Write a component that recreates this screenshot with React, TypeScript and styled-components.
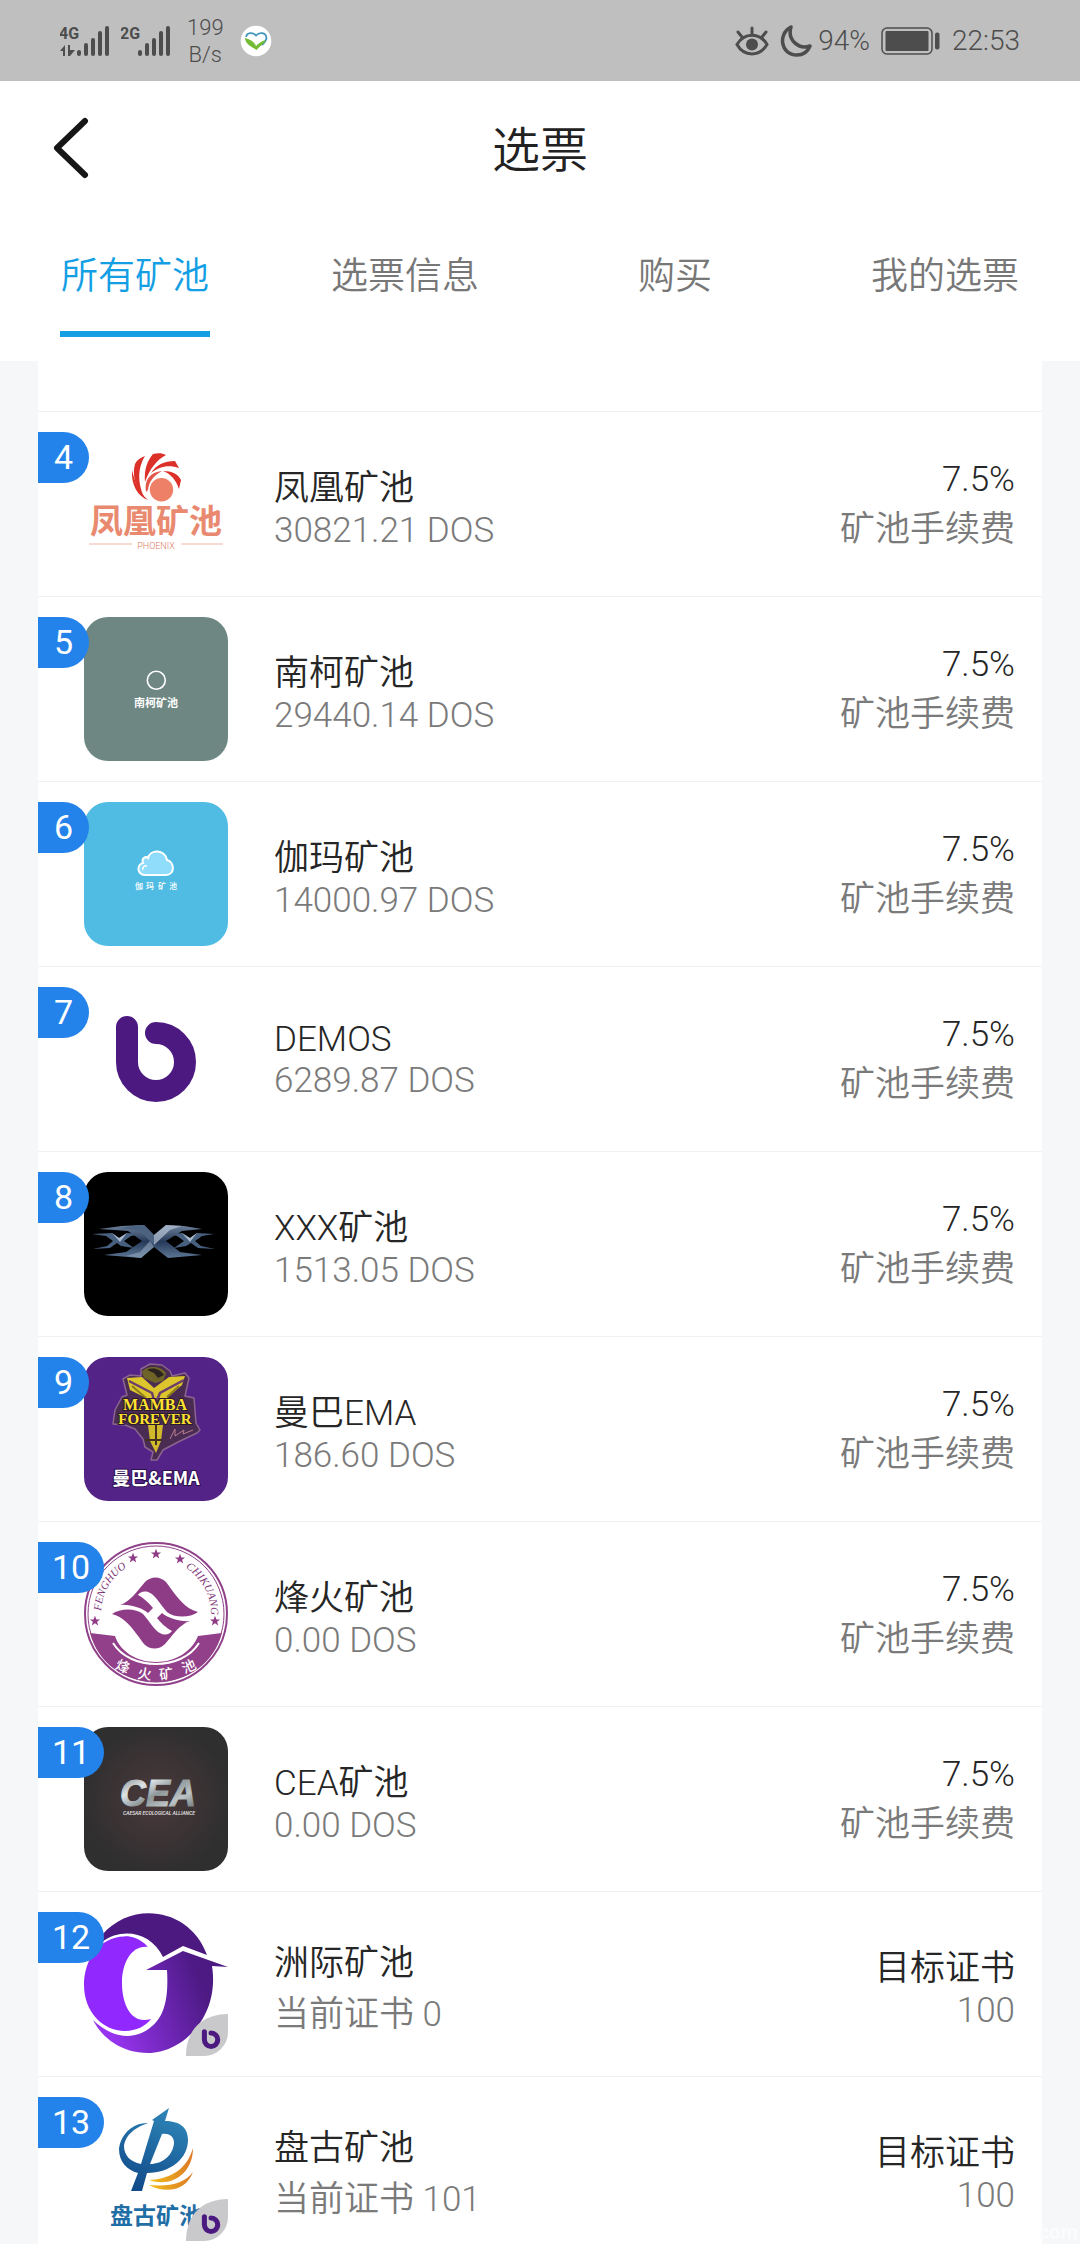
import React from 'react';
import styled, { createGlobalStyle } from 'styled-components';

const fontStack = `Roboto, "Noto Sans CJK SC", sans-serif`;

const GlobalStyle = createGlobalStyle`
  *, *::before, *::after { box-sizing: border-box; }
  body { margin: 0; background: #f6f7f9; font-family: ${fontStack}; }
  ul { margin: 0; padding: 0; list-style: none; }
  h1, p { margin: 0; font-weight: inherit; }
  button { border: 0; padding: 0; background: none; font: inherit; cursor: pointer; }
`;

const Screen = styled.div`
  position: relative;
  display: flex;
  flex-direction: column;
  height: 100vh;
  overflow: hidden;
`;

const StatusBar = styled.div`
  flex: none;
  display: flex;
  justify-content: space-between;
  align-items: center;
  height: 81px;
  padding: 0 60px;
  background: #bfbfbf;
  color: #4d4d4d;
  font-size: 28px;
  font-weight: 350;
`;

const StatusGroup = styled.div<{ $gap: number }>`
  display: flex;
  align-items: center;
  gap: ${(p) => p.$gap}px;
`;

const NetworkSpeed = styled.div`
  padding: 0 5px;
  font-size: 22px;
  line-height: 27px;
  text-align: center;
`;

const TitleBar = styled.header`
  flex: none;
  display: grid;
  grid-template-columns: 96px 1fr 96px;
  align-items: center;
  height: 136px;
  padding: 0 44px;
  background: #fff;
`;

const BackButton = styled.button`
  display: flex;
  padding: 0 8px;
`;

const Title = styled.h1`
  padding-top: 4px;
  text-align: center;
  font-size: 48px;
  font-weight: 350;
  line-height: 72px;
  color: #222;
`;

const Tabs = styled.nav`
  flex: none;
  display: flex;
  justify-content: space-between;
  padding: 33px 60px 24px;
  background: #fff;
`;

const Tab = styled.button<{ $active?: boolean }>`
  width: 150px;
  padding-bottom: 27px;
  border-bottom: 6px solid ${(p) => (p.$active ? '#149fe4' : 'transparent')};
  color: ${(p) => (p.$active ? '#149fe4' : '#777')};
  font-size: 37px;
  font-weight: 350;
  line-height: 54px;
  white-space: nowrap;
`;

const PoolList = styled.ul`
  flex: 1;
  min-height: 0;
  margin: 0 38px;
  background: #fff;
  overflow-y: auto;
  scrollbar-width: none;
`;

const PreviousRowEnd = styled.li`
  height: 50px;
`;

const PoolRow = styled.li`
  position: relative;
  display: flex;
  align-items: center;
  gap: 46px;
  height: 185px;
  padding: 0 27px 0 46px;
  border-top: 1px solid #f0f0f0;
`;

const Rank = styled.span`
  position: absolute;
  left: 0;
  top: 20px;
  min-width: 51px;
  height: 51px;
  padding: 0 14px;
  border-radius: 0 26px 26px 0;
  background: #2383ea;
  color: #fff;
  font-size: 34px;
  line-height: 50px;
  text-align: center;
`;

const LogoFrame = styled.div`
  flex: none;
  display: flex;
  width: 144px;
  height: 144px;
  border-radius: 24px;
  overflow: hidden;
`;

const Details = styled.div<{ $end?: boolean }>`
  flex: ${(p) => (p.$end ? 'none' : '1')};
  padding-top: 1px;
  text-align: ${(p) => (p.$end ? 'right' : 'left')};
  font-size: 35px;
  font-weight: 350;
`;

const Primary = styled.p`
  color: #262626;
`;

const Secondary = styled.p`
  color: #7a7a7a;
`;

const SiteMark = styled.span`
  position: absolute;
  right: 2px;
  bottom: 2px;
  color: #fbfcfd;
  font-size: 20px;
  font-weight: 700;
  line-height: 20px;
`;

const cjk = '"Noto Sans CJK SC", sans-serif';

function SignalIcon({ label, data }: { label: string; data?: boolean }) {
  return (
    <svg width="50" height="32" viewBox="0 0 50 32" fill="#4d4d4d">
      <text x="-1" y="14" fontFamily="Roboto, sans-serif" fontWeight="700" fontSize="16">{label}</text>
      {data && (
        <path d="M0 26 L5 20 V31 H3 V26Z M8 20 H10 V25 H15 L10 31 H8Z" />
      )}
      <rect x="17" y="25" width="4" height="6" rx="2" />
      <rect x="24" y="18" width="4" height="13" rx="2" />
      <rect x="31" y="13" width="4" height="18" rx="2" />
      <rect x="38" y="6" width="4" height="25" rx="2" />
      <rect x="45" y="1" width="4" height="30" rx="2" />
    </svg>
  );
}

function HealthIcon() {
  return (
    <svg width="32" height="32" viewBox="0 0 32 32">
      <circle cx="16" cy="16" r="15.3" fill="#fff" />
      <path d="M6 12 C7 7 13 7 16 10.500 C19 7 26 7 26.500 13 C26 16 24 18 22 20" fill="none" stroke="#4596bd" strokeWidth="1.800" />
      <path d="M5 13 C9 14 14 16 16 21 C18 19 21 16 26 15 C24 19 20 21 16.500 25 C12 22 5 19 5 13Z" fill="#74bb35" />
    </svg>
  );
}

function EyeIcon() {
  return (
    <svg width="34" height="30" viewBox="0 0 34 30" fill="none" stroke="#4d4d4d" strokeWidth="3" strokeLinecap="round">
      <path d="M2 18.500 C9 6 25 6 32 18.500 C25 31 9 31 2 18.500Z" />
      <path d="M17 2 V8 M3 6 L7 11 M31 6 L27 11" />
      <circle cx="17" cy="18.500" r="6" fill="#4d4d4d" stroke="none" />
    </svg>
  );
}

function MoonIcon() {
  return (
    <svg width="32" height="32" viewBox="0 0 32 32" fill="none" stroke="#4d4d4d" strokeWidth="3.500" strokeLinejoin="round">
      <path d="M11 2 C-2 8 0 30 17 30 C24 30 28 26 30 21 C19 25 7 15 11 2Z" />
    </svg>
  );
}

function BatteryIcon() {
  return (
    <svg width="60" height="28" viewBox="0 0 60 28">
      <rect x="1" y="1" width="50" height="26" rx="5" fill="none" stroke="#4d4d4d" strokeWidth="1.500" />
      <rect x="4.500" y="4" width="43" height="20" rx="1" fill="#4d4d4d" />
      <rect x="54" y="5.500" width="4.500" height="17" rx="2" fill="#4d4d4d" />
    </svg>
  );
}

function PhoenixLogo() {
  return (
    <svg width="144" height="144" viewBox="0 0 144 144">
      <g fill="#dc3129">
        <path d="M48 38 C47 52 53 64 64 68 C55 60 51 51 48 38Z" />
        <path d="M51 32 C53 28 56 26 61 24 C54 35 53 50 60 65 C51 55 48 43 51 32Z" />
        <path d="M69 22 C74 21 78 21 82 23 C73 28 66 36 61 50 C60 38 63 29 69 22Z" />
        <path d="M67 41 C72 33 80 29 91 29 L95 36 C84 32 75 35 67 41Z" />
        <path d="M79 39 C88 39 94 42 97 48 L95 57 C92 48 87 42 79 39Z" />
      </g>
      <path d="M62 60 C60 48 66 40 78 39 C69 44 65 50 64 58Z" fill="#e2574a" />
      <circle cx="77.500" cy="57.700" r="11.700" fill="#ee8068" />
      <text x="72" y="101" textAnchor="middle" fontFamily={cjk} fontWeight="700" fontSize="33" fill="#e98a70">凤凰矿池</text>
      <path d="M5 112 H48 M97 112 H139" stroke="#efb5a4" strokeWidth="1" />
      <text x="72" y="117" textAnchor="middle" fontFamily="Roboto, sans-serif" fontWeight="300" fontSize="9" fill="#e07a60">PHOENIX</text>
    </svg>
  );
}

function NankeLogo() {
  return (
    <svg width="144" height="144" viewBox="0 0 144 144">
      <rect width="144" height="144" fill="#6e8783" />
      <circle cx="72.300" cy="63.300" r="9" fill="none" stroke="#fff" strokeWidth="1.600" />
      <text x="72" y="90" textAnchor="middle" fontFamily={cjk} fontWeight="700" fontSize="11" fill="#fff">南柯矿池</text>
    </svg>
  );
}

function GammaLogo() {
  return (
    <svg width="144" height="144" viewBox="0 0 144 144">
      <rect width="144" height="144" fill="#50bce4" />
      <path d="M62 73 C52 73 53 62 59 61 C57 56 62 54 64 56 C66 47 81 47 83 58 C91 60 91 73 82 73Z" fill="#8fdcfb" stroke="#fff" strokeWidth="2" />
      <path d="M59 68 C58 65 61 63 63 64" fill="none" stroke="#fff" strokeWidth="1.500" />
      <text x="51 62 74 85" y="87" fontFamily={cjk} fontWeight="500" fontSize="8" fill="#fff">伽玛矿池</text>
    </svg>
  );
}

const DemosGlyph = ({ color = '#4c1980' }: { color?: string }) => (
  <path d="M43 40 V75 A29 29 0 1 0 72 46" fill="none" stroke={color} strokeWidth="22" strokeLinecap="round" />
);

function DemosLogo() {
  return (
    <svg width="144" height="144" viewBox="0 0 144 144">
      <DemosGlyph />
    </svg>
  );
}

function XxxLogo() {
  return (
    <svg width="144" height="144" viewBox="0 0 144 144">
      <defs>
        <linearGradient id="steel" x1="0" y1="0" x2="0" y2="1">
          <stop offset="0" stopColor="#6f839d" />
          <stop offset="0.5" stopColor="#263a58" />
          <stop offset="1" stopColor="#5d7696" />
        </linearGradient>
      </defs>
      <rect width="144" height="144" fill="#000" />
      <g fill="#48607f">
        <path d="M8 62 L28 61 L35 66 L43 61 L58 62 L47 64 L40 69 L50 76 L37 74 L33 71 L26 76 L9 77 L23 74 L29 69 L22 64Z" />
        <path d="M130 62 L113 61 L106 66 L98 61 L84 62 L93 64 L100 69 L90 76 L102 74 L107 71 L114 76 L131 77 L117 74 L111 69 L118 64Z" />
      </g>
      <path d="M28 61 L35 66 L43 61 L36 70Z M98 61 L106 66 L113 61 L106 70Z" fill="#a9b9cb" />
      <path d="M15 57 L38 54 L60 53 L70 63 L82 53 L100 54 L118 57 L98 59 L82 69 L96 80 L118 83 L84 86 L70 75 L57 86 L20 83 L42 80 L58 69 L44 59Z" fill="url(#steel)" />
      <path d="M70 63 L82 53 L98 54 L86 58 L70 73Z" fill="#b1bfd0" opacity="0.750" />
      <path d="M54 53 L60 53 L70 63 V73 L56 59 L36 56Z" fill="#4b6280" />
      <path d="M70 75 L57 86 L42 84 L56 80 L66 69Z" fill="#90a3ba" opacity="0.600" />
    </svg>
  );
}

function MambaLogo() {
  return (
    <svg width="144" height="144" viewBox="0 0 144 144">
      <rect width="144" height="144" fill="#532387" />
      <path
        d="M57 12 L66 7 L78 8 L86 14 L88 19 L101 16 L105 21 L101 39 L110 41 L112 66 L116 73 L113 76 L96 84 L79 93 L73 103 L67 103 L69 95 L61 90 L59 82 L51 72 L41 68 L29 67 L31 53 L38 40 L43 38 L39 22 L46 18 L57 19Z"
        fill="#4a2b52" stroke="#8b6590" strokeWidth="1.500" strokeLinejoin="round"
      />
      <path d="M58 15 C62 8 79 8 82 17 L79 24 L71 26 L60 21Z" fill="#6f6428" />
      <path d="M63 13 C69 10 76 12 80 18 L74 21 L70 16Z" fill="#2b2320" />
      <path d="M43 21 L58 20 L70 31 L85 20 L101 19 L98 28 L83 41 H62 L46 33Z" fill="#dcc52d" />
      <path d="M45 24 L68 36 L70 43 M100 23 L76 36 L73 43" stroke="#6b3f6b" strokeWidth="2.500" fill="none" />
      <path d="M48 29 L62 41 M95 29 L83 40" stroke="#8d7c1c" strokeWidth="2" />
      <path d="M64 68 L79 68 L77 84 L72 96 L66 84Z" fill="#d0b92b" />
      <path d="M72 68 V88 M61 83 H78" stroke="#43301f" strokeWidth="2" />
      <path d="M86 82 L91 72 L91 79 L100 73 L99 77 L109 73" stroke="#b87c8e" strokeWidth="1" fill="none" />
      <g fontFamily='"Liberation Serif", serif' fontWeight="700" textAnchor="middle" fill="#ffe22f" stroke="#2b1a2b" strokeWidth="2" paintOrder="stroke">
        <text x="71" y="53" fontSize="16">MAMBA</text>
        <text x="71" y="67" fontSize="15">FOREVER</text>
      </g>
      <text x="72" y="128" textAnchor="middle" fontFamily={cjk} fontWeight="700" fontSize="18" fill="#fff" stroke="#2d104e" strokeWidth="2" paintOrder="stroke">曼巴&amp;EMA</text>
    </svg>
  );
}

const star = 'M0 -5.200 L1.400 -1.600 L5.100 -1.600 L2.100 0.700 L3.200 4.400 L0 2.200 L-3.200 4.400 L-2.100 0.700 L-5.100 -1.600 L-1.400 -1.600Z';
const emblem = 'M36 63 C46 60 54 48 61 40 C67 34 76 34 82 40 C94 56 100 66 114 70 C106 76 90 76 83 70 C76 62 71 53 66 51 C61 48 56 50 54 53 C60 56 66 62 69 66 L64 71 C58 66 46 62 36 63Z';

function BeaconLogo() {
  return (
    <svg width="144" height="144" viewBox="0 0 144 144">
      <defs>
        <path id="beaconLeft" d="M17 70 A55 55 0 0 1 72 17" />
        <path id="beaconRight" d="M72 17 A55 55 0 0 1 127 72" />
      </defs>
      <circle cx="72" cy="72" r="71" fill="#fff" stroke="#8f4189" strokeWidth="2" />
      <circle cx="72" cy="72" r="68" fill="none" stroke="#8f4189" strokeWidth="1" />
      <path d="M6 91 L31 94 C36 109 52 120 72 120 C92 120 108 109 114 94 L138 91 C130 121 104 140 72 140 C40 140 14 121 6 91Z" fill="#924089" />
      <path d="M29 101 C46 129 98 129 115 101" fill="none" stroke="#fff" strokeWidth="2" />
      <g fill="#8f3c87">
        {[[11, 79], [49, 16], [72, 12], [96, 17], [131, 79]].map(([x, y]) => (
          <path key={x} d={star} transform={`translate(${x} ${y})`} />
        ))}
        <path d={emblem} />
        <path d={emblem} transform="rotate(180 71 71)" />
      </g>
      <g fontFamily='"Liberation Serif", serif' fontStyle="italic" fontSize="11" fill="#7d3578">
        <text><textPath href="#beaconLeft" startOffset="1">FENGHUO</textPath></text>
        <text><textPath href="#beaconRight" startOffset="31">CHIKUANG</textPath></text>
      </g>
      <g fontFamily={cjk} fontWeight="500" fontSize="14" fill="#fff" textAnchor="middle">
        <text transform="translate(37 129) rotate(24)">烽</text>
        <text transform="translate(60 137) rotate(8)">火</text>
        <text transform="translate(83 137) rotate(-8)">矿</text>
        <text transform="translate(107 129) rotate(-24)">池</text>
      </g>
    </svg>
  );
}

function CeaLogo() {
  return (
    <svg width="144" height="144" viewBox="0 0 144 144">
      <defs>
        <radialGradient id="ceaGlow">
          <stop offset="0" stopColor="#4a393b" />
          <stop offset="1" stopColor="#302f30" />
        </radialGradient>
        <linearGradient id="ceaMetal" x1="0" y1="0" x2="1" y2="1">
          <stop offset="0" stopColor="#6f7779" />
          <stop offset="0.3" stopColor="#dfe4e6" />
          <stop offset="0.5" stopColor="#8e989b" />
          <stop offset="0.7" stopColor="#bdc5c7" />
          <stop offset="1" stopColor="#4e5658" />
        </linearGradient>
      </defs>
      <rect width="144" height="144" fill="url(#ceaGlow)" />
      <text x="74" y="79" textAnchor="middle" fontFamily='"Liberation Sans", sans-serif' fontWeight="700" fontStyle="italic" fontSize="36" fill="url(#ceaMetal)" stroke="url(#ceaMetal)" strokeWidth="1">CEA</text>
      <text x="75" y="88" textAnchor="middle" fontFamily="Roboto, sans-serif" fontWeight="500" fontStyle="italic" fontSize="5" fill="#e8e8e8">CAESAR ECOLOGICAL ALLIANCE</text>
    </svg>
  );
}

function CertificateCorner() {
  return (
    <g>
      <path d="M144 102 C118 102 102 118 102 144 H132 Q144 144 144 132Z" fill="#c9c9cb" />
      <g transform="translate(110.500 110.500) scale(0.230)">
        <DemosGlyph />
      </g>
    </g>
  );
}

function IntercontinentalLogo() {
  return (
    <svg width="144" height="144" viewBox="0 0 144 144">
      <defs>
        <linearGradient id="arrowFill" x1="0.1" y1="0.7" x2="0.85" y2="0.5">
          <stop offset="0" stopColor="#9634f0" />
          <stop offset="1" stopColor="#4d1a84" />
        </linearGradient>
      </defs>
      <path d="M18 23 C48 -12 106 -4 123 43 L99 34 L79 45 C67 20 38 15 18 30Z" fill="#4c1980" />
      <path d="M64 35 C54 24 43 24 40 24.500 C16 25 0 47 0 73 C0 99 18 119 41 119 C52 119 62 114 67 107 C47 113 38 92 38 71 C38 50 48 33 64 35Z" fill="#9129ff" />
      <path d="M99 39 L144 55 L128 54 C136 103 100 141 64 141 C38 141 18 126 9 108 C31 129 53 127 67 115 C84 102 84 76 83 58 H62Z" fill="url(#arrowFill)" />
      <CertificateCorner />
    </svg>
  );
}

function PanguLogo() {
  return (
    <svg width="144" height="144" viewBox="0 0 144 144">
      <defs>
        <linearGradient id="panguBlue" x1="0.7" y1="0" x2="0.3" y2="1">
          <stop offset="0" stopColor="#2e86b8" />
          <stop offset="1" stopColor="#114a8a" />
        </linearGradient>
        <linearGradient id="panguGold" x1="0" y1="0" x2="1" y2="0">
          <stop offset="0" stopColor="#f3bf1c" />
          <stop offset="1" stopColor="#dc7a26" />
        </linearGradient>
      </defs>
      <path
        fillRule="evenodd"
        d="M85 11 L68 23 L70 24 L57 67 C46 65 40 58 40 49 C41 38 52 30 64 26 C48 25 36 39 35 52 C35 65 43 73 54 76 L47 94 H58 L63 76 C87 76 104 61 104 43 C104 30 95 24 81 24Z M78 37 C86 36 90 40 90 46 C89 58 79 67 66 67Z"
        fill="url(#panguBlue)"
      />
      <path d="M109 51 C103 72 87 82 65 83 C87 91 109 77 109 51Z M109 75 C101 86 86 90 65 88 C84 98 103 92 109 75Z" fill="url(#panguGold)" />
      <text x="26" y="127" fontFamily={cjk} fontWeight="700" fontSize="23" fill="#1f6ea5">盘古矿池</text>
      <CertificateCorner />
    </svg>
  );
}

interface Pool {
  rank: number;
  name: string;
  amount: string;
  value: string;
  caption: string;
  Logo: () => React.JSX.Element;
}

const fee = { value: '7.5%', caption: '矿池手续费' };
const target = { value: '目标证书', caption: '100' };

const pools: Pool[] = [
  { rank: 4, name: '凤凰矿池', amount: '30821.21 DOS', ...fee, Logo: PhoenixLogo },
  { rank: 5, name: '南柯矿池', amount: '29440.14 DOS', ...fee, Logo: NankeLogo },
  { rank: 6, name: '伽玛矿池', amount: '14000.97 DOS', ...fee, Logo: GammaLogo },
  { rank: 7, name: 'DEMOS', amount: '6289.87 DOS', ...fee, Logo: DemosLogo },
  { rank: 8, name: 'XXX矿池', amount: '1513.05 DOS', ...fee, Logo: XxxLogo },
  { rank: 9, name: '曼巴EMA', amount: '186.60 DOS', ...fee, Logo: MambaLogo },
  { rank: 10, name: '烽火矿池', amount: '0.00 DOS', ...fee, Logo: BeaconLogo },
  { rank: 11, name: 'CEA矿池', amount: '0.00 DOS', ...fee, Logo: CeaLogo },
  { rank: 12, name: '洲际矿池', amount: '当前证书 0', ...target, Logo: IntercontinentalLogo },
  { rank: 13, name: '盘古矿池', amount: '当前证书 101', ...target, Logo: PanguLogo },
];

const tabs = ['所有矿池', '选票信息', '购买', '我的选票'];

export default function App() {
  const [active, setActive] = React.useState(0);
  return (
    <Screen lang="zh-CN">
      <GlobalStyle />
      <StatusBar>
        <StatusGroup $gap={11}>
          <SignalIcon label="4G" data />
          <SignalIcon label="2G" />
          <NetworkSpeed>199<br />B/s</NetworkSpeed>
          <HealthIcon />
        </StatusGroup>
        <StatusGroup $gap={11}>
          <EyeIcon />
          <StatusGroup $gap={6}>
            <MoonIcon />
            <span>94%</span>
          </StatusGroup>
          <BatteryIcon />
          <span>22:53</span>
        </StatusGroup>
      </StatusBar>
      <TitleBar>
        <BackButton type="button" aria-label="返回">
          <svg width="40" height="64" viewBox="0 0 40 64" fill="none" stroke="#161616" strokeWidth="6" strokeLinecap="round" strokeLinejoin="round">
            <path d="M33 4 L5 31 L33 58" />
          </svg>
        </BackButton>
        <Title>选票</Title>
      </TitleBar>
      <Tabs>
        {tabs.map((name, i) => (
          <Tab key={name} type="button" $active={i === active} onClick={() => setActive(i)}>
            {name}
          </Tab>
        ))}
      </Tabs>
      <PoolList>
        <PreviousRowEnd />
        {pools.map(({ rank, name, amount, value, caption, Logo }) => (
          <PoolRow key={rank}>
            <LogoFrame><Logo /></LogoFrame>
            <Rank>{rank}</Rank>
            <Details>
              <Primary>{name}</Primary>
              <Secondary>{amount}</Secondary>
            </Details>
            <Details $end>
              <Primary>{value}</Primary>
              <Secondary>{caption}</Secondary>
            </Details>
          </PoolRow>
        ))}
      </PoolList>
      <SiteMark>com</SiteMark>
    </Screen>
  );
}
